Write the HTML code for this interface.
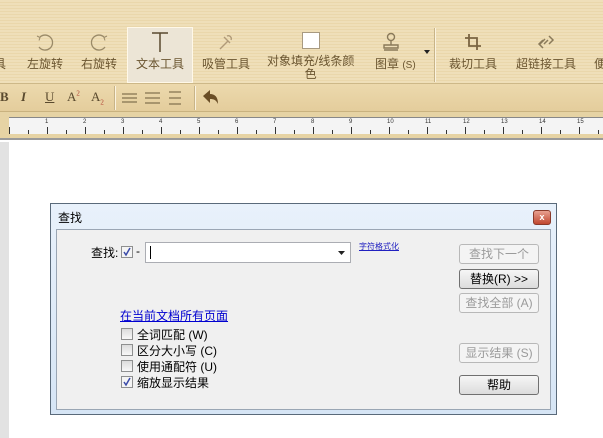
<!DOCTYPE html>
<html><head><meta charset="utf-8"><style>
*{margin:0;padding:0;box-sizing:border-box}
body{width:603px;height:438px;overflow:hidden;position:relative;background:#fff;font-family:"Liberation Sans","Noto Sans CJK SC",sans-serif;font-size:12px;color:#000}
.tb{position:absolute;left:0;top:0;width:603px;height:84px;background:repeating-linear-gradient(#efdfb9 0 2px,#ead7ab 2px 3px);border-bottom:1px solid #cdb888}
.fb{position:absolute;left:0;top:84px;width:603px;height:28px;background:linear-gradient(#ecd9ad,#e4cd9c);border-bottom:1px solid #c9b27f}
.rb{position:absolute;left:0;top:112px;width:603px;height:28px;background:#e6d3a4;border-bottom:2px solid #9a9a9a}
.lbl{position:absolute;top:55px;font-size:12px;color:#6a5530;white-space:nowrap}
.ic{position:absolute}
.ruler{position:absolute;left:9px;top:117px;width:594px;height:17px;background:#f4f4f4;border-top:1px solid #888}
.tk{position:absolute;bottom:0;width:1px;background:#333}
.num{position:absolute;top:1px;font-size:6px;color:#333}
.dlg{position:absolute;left:50px;top:203px;width:507px;height:212px;border:1px solid #5a6a7a;background:linear-gradient(#e8f1fb,#d6e5f5)}
.body{position:absolute;left:5px;top:25px;width:495px;height:181px;background:#f0f0f0;border:1px solid #9aa6b4}
.btn{position:absolute;width:80px;height:20px;border:1px solid #b8b8b8;border-radius:3px;background:#f4f4f4;color:#9a9a9a;text-align:center;line-height:18px;font-size:12px}
.btn.on{border-color:#707070;background:linear-gradient(#f6f6f6,#dcdcdc);color:#000}
.cb{position:absolute;width:12px;height:12px;border:1px solid #8e8f8f;background:linear-gradient(#dcdcdc,#f8f8f8)}
.t{position:absolute;white-space:nowrap;font-size:12px}
</style></head><body>
<div class="tb"></div>
<div style="position:absolute;left:127px;top:27px;width:66px;height:56px;background:#ece5d6;border:1px solid #fff8e8"></div>
<div style="position:absolute;left:434px;top:28px;width:2px;height:54px;background:#fbf3e0;border-left:1px solid #c8b488"></div>
<svg class="ic" style="left:34px;top:31px" width="22" height="22"><path d="M6 6 A7.5 7.5 0 1 1 5 16" fill="none" stroke="#9a8a68" stroke-width="1.3"/><path d="M3 5 l3 1.5 -1 3" fill="none" stroke="#9a8a68"/></svg>
<svg class="ic" style="left:88px;top:31px" width="22" height="22"><path d="M16 6 A7.5 7.5 0 1 0 17 16" fill="none" stroke="#9a8a68" stroke-width="1.3"/><path d="M19 5 l-3 1.5 1 3" fill="none" stroke="#9a8a68"/></svg>
<svg class="ic" style="left:149px;top:31px" width="22" height="22"><path d="M3 2 h16 M11 2 v19" stroke="#5a4a2e" stroke-width="1.5"/></svg>
<svg class="ic" style="left:214px;top:31px" width="22" height="22"><path d="M6 18 l8 -8 M10 6 l6 6 M13 5 a3 3 0 0 1 4 4" stroke="#b09a78" stroke-width="1.4" fill="none"/></svg>
<div style="position:absolute;left:302px;top:32px;width:18px;height:17px;background:#fff;border:1px solid #a89a80"></div>
<svg class="ic" style="left:380px;top:31px" width="22" height="22"><circle cx="11" cy="6" r="3.5" fill="none" stroke="#8a7a5a" stroke-width="1.4"/><path d="M11 10 v4 M4 14 h14 v3 H4z M4 19 h14" stroke="#8a7a5a" stroke-width="1.4" fill="none"/></svg>
<svg class="ic" style="left:424px;top:50px" width="7" height="5"><path d="M0 0 h6 l-3 4z" fill="#222"/></svg>
<svg class="ic" style="left:463px;top:31px" width="22" height="22"><path d="M6 3 v12 h12 M2 7 h12 v12" stroke="#7a6442" stroke-width="1.8" fill="none"/></svg>
<svg class="ic" style="left:535px;top:31px" width="22" height="22"><path d="M5 13 l5 -5 M8 17 l-4 -4 4 -4 M14 5 l4 4 -4 4 M9 13 l4 -4" stroke="#8a7a5a" stroke-width="1.5" fill="none"/></svg>
<div class="lbl" style="left:-6px">具</div>
<div class="lbl" style="left:27px">左旋转</div>
<div class="lbl" style="left:81px">右旋转</div>
<div class="lbl" style="left:136px">文本工具</div>
<div class="lbl" style="left:202px">吸管工具</div>
<div class="lbl" style="left:267px;text-align:center;line-height:13px;top:55px">对象填充/线条颜<br>色</div>
<div class="lbl" style="left:375px">图章 <span style="font-size:10px">(S)</span></div>
<div class="lbl" style="left:449px">裁切工具</div>
<div class="lbl" style="left:516px">超链接工具</div>
<div class="lbl" style="left:594px">便</div>
<div class="fb"></div>
<div style="position:absolute;left:0;top:89px;font:bold 13px 'Liberation Serif',serif;color:#5a4a2e">B</div>
<div style="position:absolute;left:21px;top:89px;font:italic bold 13px 'Liberation Serif',serif;color:#5a4a2e">I</div>
<div style="position:absolute;left:45px;top:89px;font:13px 'Liberation Serif',serif;color:#5a4a2e;text-decoration:underline">U</div>
<div style="position:absolute;left:67px;top:89px;font:13px 'Liberation Serif',serif;color:#5a4a2e">A<sup style="font-size:7px;color:#b04030">2</sup></div>
<div style="position:absolute;left:91px;top:89px;font:13px 'Liberation Serif',serif;color:#5a4a2e">A<sub style="font-size:7px;color:#b04030">2</sub></div>
<div style="position:absolute;left:114px;top:86px;width:2px;height:24px;border-left:1px solid #c8b488;background:#fbf3e0"></div>
<svg class="ic" style="left:121px;top:91px" width="60" height="14"><path d="M1 3h15M1 7h15M1 11h15M24 2h15M24 7h15M24 12h15M48 1h14M48 7h14M48 13h14" stroke="#6a5a3a"/></svg>
<div style="position:absolute;left:194px;top:86px;width:2px;height:24px;border-left:1px solid #c8b488;background:#fbf3e0"></div>
<svg class="ic" style="left:201px;top:89px" width="18" height="18"><path d="M2 7 l7 -6 v4 c5 0 8 3 8 10 c-2 -4 -4 -5 -8 -5 v4z" fill="#6a4e26"/></svg>
<div class="rb"></div>
<div class="ruler" id="r"></div>
<div style="position:absolute;left:0;top:142px;width:9px;height:296px;background:#e2e2e2"></div>
<div class="dlg">
<div class="t" style="left:7px;top:5px">查找</div>
<div style="position:absolute;left:482px;top:6px;width:18px;height:15px;border:1px solid #8a3a2a;border-radius:3px;background:linear-gradient(#e8a090,#c04830);color:#fff;font-size:9px;font-weight:bold;text-align:center;line-height:13px">x</div>
<div class="body">
<div class="t" style="left:34px;top:14px">查找:</div>
<div class="cb" style="left:64px;top:16px;background:#f4f4f4"><svg width="10" height="10" style="position:absolute;left:0;top:0"><path d="M2 5 l2 3 4 -7" stroke="#3a4aa8" stroke-width="1.5" fill="none"/></svg></div>
<div class="t" style="left:79px;top:14px">-</div>
<div style="position:absolute;left:88px;top:12px;width:206px;height:21px;background:#fff;border:1px solid #abadb3"><div style="position:absolute;left:4px;top:3px;width:1px;height:13px;background:#000"></div><svg style="position:absolute;right:5px;top:8px" width="7" height="4"><path d="M0 0h7l-3.5 4z" fill="#222"/></svg></div>
<div class="t" style="left:302px;top:11px;font-size:8px;color:#2020c0;text-decoration:underline">字符格式化</div>
<div class="btn" style="left:402px;top:14px">查找下一个</div>
<div class="btn on" style="left:402px;top:39px">替换(R) &gt;&gt;</div>
<div class="btn" style="left:402px;top:63px">查找全部 (A)</div>
<div class="btn" style="left:402px;top:113px">显示结果 (S)</div>
<div class="btn on" style="left:402px;top:145px">帮助</div>
<div class="t" style="left:63px;top:77px;color:#0000d0;text-decoration:underline">在当前文档所有页面</div>
<div class="cb" style="left:64px;top:98px"></div><div class="t" style="left:80px;top:96px">全词匹配 (W)</div>
<div class="cb" style="left:64px;top:114px"></div><div class="t" style="left:80px;top:112px">区分大小写 (C)</div>
<div class="cb" style="left:64px;top:130px"></div><div class="t" style="left:80px;top:128px">使用通配符 (U)</div>
<div class="cb" style="left:64px;top:146px;background:#f4f4f4"><svg width="10" height="10" style="position:absolute;left:0;top:0"><path d="M2 5 l2 3 4 -7" stroke="#3a4aa8" stroke-width="1.5" fill="none"/></svg></div><div class="t" style="left:80px;top:144px">缩放显示结果</div>
</div></div>
<script>
var r=document.getElementById('r'),h='';
for(var i=0;i<32;i++){var x=i*19;var L=i%2==0;h+='<div class="tk" style="left:'+x+'px;height:'+(L?7:4)+'px"></div>';if(L&&i>0)h+='<div class="num" style="left:'+(x-2)+'px">'+(i/2)+'</div>';}
r.innerHTML=h;
</script>
</body></html>
